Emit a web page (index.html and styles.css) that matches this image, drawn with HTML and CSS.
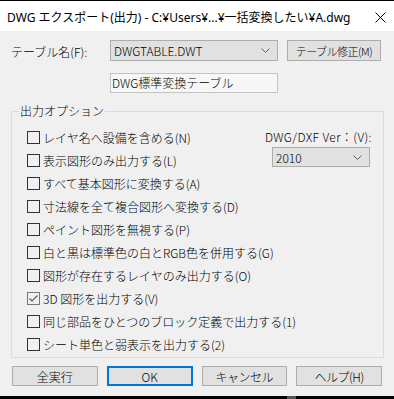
FILE: index.html
```html
<!DOCTYPE html>
<html>
<head>
  <title>DWG エクスポート(出力)</title>
  <link rel="stylesheet" href="styles.css">
</head>
<body>
  <div class="window">
    <div class="titlebar">
      <span class="title">DWG エクスポート(出力) - C:¥Users¥...¥一括変換したい¥A.dwg</span>
      <svg class="close" width="11" height="11" viewBox="0 0 11 11"><path d="M0.5 0.5 L10.5 10.5 M10.5 0.5 L0.5 10.5" stroke="#000" stroke-width="1" fill="none"/></svg>
    </div>

    <div class="content">
      <div class="table-row">
        <span class="field-label">テーブル名(F):</span>
        <div class="combo table-combo">
          <span>DWGTABLE.DWT</span>
          <svg class="chevron" width="9" height="5" viewBox="0 0 9 5"><path d="M0.5 0.5 L4.5 4.5 L8.5 0.5" stroke="#606060" fill="none"/></svg>
        </div>
        <button class="btn edit-btn">テーブル修正(M)</button>
      </div>

      <div class="desc-row">
        <div class="textbox">DWG標準変換テーブル</div>
      </div>

      <fieldset class="options">
        <legend>出力オプション</legend>
        <div class="options-inner">
          <ul class="checks">
            <li><span class="box"></span>レイヤ名へ設備を含める(N)</li>
            <li><span class="box"></span>表示図形のみ出力する(L)</li>
            <li><span class="box"></span>すべて基本図形に変換する(A)</li>
            <li><span class="box"></span>寸法線を全て複合図形へ変換する(D)</li>
            <li><span class="box"></span>ペイント図形を無視する(P)</li>
            <li><span class="box"></span>白と黒は標準色の白とRGB色を併用する(G)</li>
            <li><span class="box"></span>図形が存在するレイヤのみ出力する(O)</li>
            <li><span class="box checked"><svg width="11" height="11" viewBox="0 0 11 11"><path d="M1.5 5.5 L4 8 L9.5 2.5" stroke="#606060" stroke-width="1.2" fill="none"/></svg></span>3D 図形を出力する(V)</li>
            <li><span class="box"></span>同じ部品をひとつのブロック定義で出力する(1)</li>
            <li><span class="box"></span>シート単色と弱表示を出力する(2)</li>
          </ul>
          <div class="version">
            <span class="version-label">DWG/DXF Ver：(V):</span>
            <div class="combo version-combo">
              <span>2010</span>
              <svg class="chevron" width="9" height="5" viewBox="0 0 9 5"><path d="M0.5 0.5 L4.5 4.5 L8.5 0.5" stroke="#606060" fill="none"/></svg>
            </div>
          </div>
        </div>
      </fieldset>

      <div class="actions">
        <button class="btn">全実行</button>
        <button class="btn default">OK</button>
        <button class="btn narrow">キャンセル</button>
        <button class="btn narrow">ヘルプ(H)</button>
      </div>
    </div>

    <div class="taskbar"><span class="taskbar-gap"></span></div>
  </div>
</body>
</html>
```

FILE: styles.css
```css
* {
  box-sizing: border-box;
}
body {
  margin: 0;
  width: 394px;
  height: 399px;
  overflow: hidden;
  background: #f0f0f0;
  color: #000;
  font-family: "Noto Sans CJK JP", sans-serif;
  font-size: 12px;
  font-weight: 300;
}
.window {
  height: 399px;
  display: flex;
  flex-direction: column;
  border-top: 1px solid #000;
}
.titlebar {
  height: 30px;
  flex: none;
  background: #fff;
  display: flex;
  align-items: center;
  justify-content: space-between;
  padding: 2px 8px 0 7px;
}
.title {
  font-family: "Noto Sans", "Noto Sans CJK JP", sans-serif;
  font-size: 12px;
  font-weight: 400;
  white-space: nowrap;
}
.content {
  flex: 1;
  padding: 9px 0 0 11px;
}
.table-row {
  display: flex;
  align-items: center;
  height: 21px;
}
.field-label {
  width: 99px;
  padding-top: 1px;
}
.combo {
  display: flex;
  align-items: center;
  justify-content: space-between;
  height: 21px;
  background: #e1e1e1;
  border: 1px solid #adadad;
  padding: 0 7px 0 3px;
}
.table-combo {
  width: 168px;
}
.btn {
  height: 20px;
  padding: 0;
  background: #e1e1e1;
  border: 1px solid #adadad;
  font: inherit;
  color: #000;
  white-space: nowrap;
}
.btn.narrow {
  letter-spacing: -0.5px;
}
.edit-btn {
  width: 94px;
  height: 21px;
  margin-left: 9px;
  font-size: 11px;
  letter-spacing: -0.5px;
}
.desc-row {
  margin-top: 12px;
  padding-left: 99px;
}
.textbox {
  width: 168px;
  height: 20px;
  line-height: 18px;
  padding-left: 1px;
  background: #f7f7f7;
  border: 1px solid #c4c4c4;
}
.options {
  width: 373px;
  margin: 11px 0 0 0;
  padding: 8px 11px 1px 15px;
  border: 1px solid #dcdcdc;
  min-width: 0;
}
.options legend {
  margin-left: -8px;
  padding: 0 1px;
  line-height: 14px;
}
.options-inner {
  display: flex;
}
.checks {
  flex: 1 1 0;
  min-width: 0;
  list-style: none;
  margin: 0;
  padding: 0;
  white-space: nowrap;
}
.checks li {
  height: 23px;
  display: flex;
  align-items: center;
  gap: 3px;
}
.box {
  width: 13px;
  height: 13px;
  flex: none;
  border: 1px solid #333;
  display: flex;
  align-items: center;
  justify-content: center;
}
.box.checked {
  border-color: #777;
}
.version {
  flex: none;
  display: flex;
  flex-direction: column;
  align-items: flex-end;
}
.version-label {
  line-height: 21px;
  letter-spacing: 0.4px;
  white-space: nowrap;
}
.version-combo {
  width: 98px;
  height: 20px;
  margin-right: 2px;
}
.actions {
  margin-top: 8px;
  margin-left: 1px;
  width: 370px;
  display: grid;
  grid-template-columns: repeat(4, 1fr);
  gap: 9px;
}
.btn.default {
  border: 2px solid #0078d7;
}
.taskbar {
  height: 3px;
  flex: none;
  background: #000;
  display: flex;
}
.taskbar-gap {
  width: 9px;
  margin-left: 287px;
  background: #555;
}
```
